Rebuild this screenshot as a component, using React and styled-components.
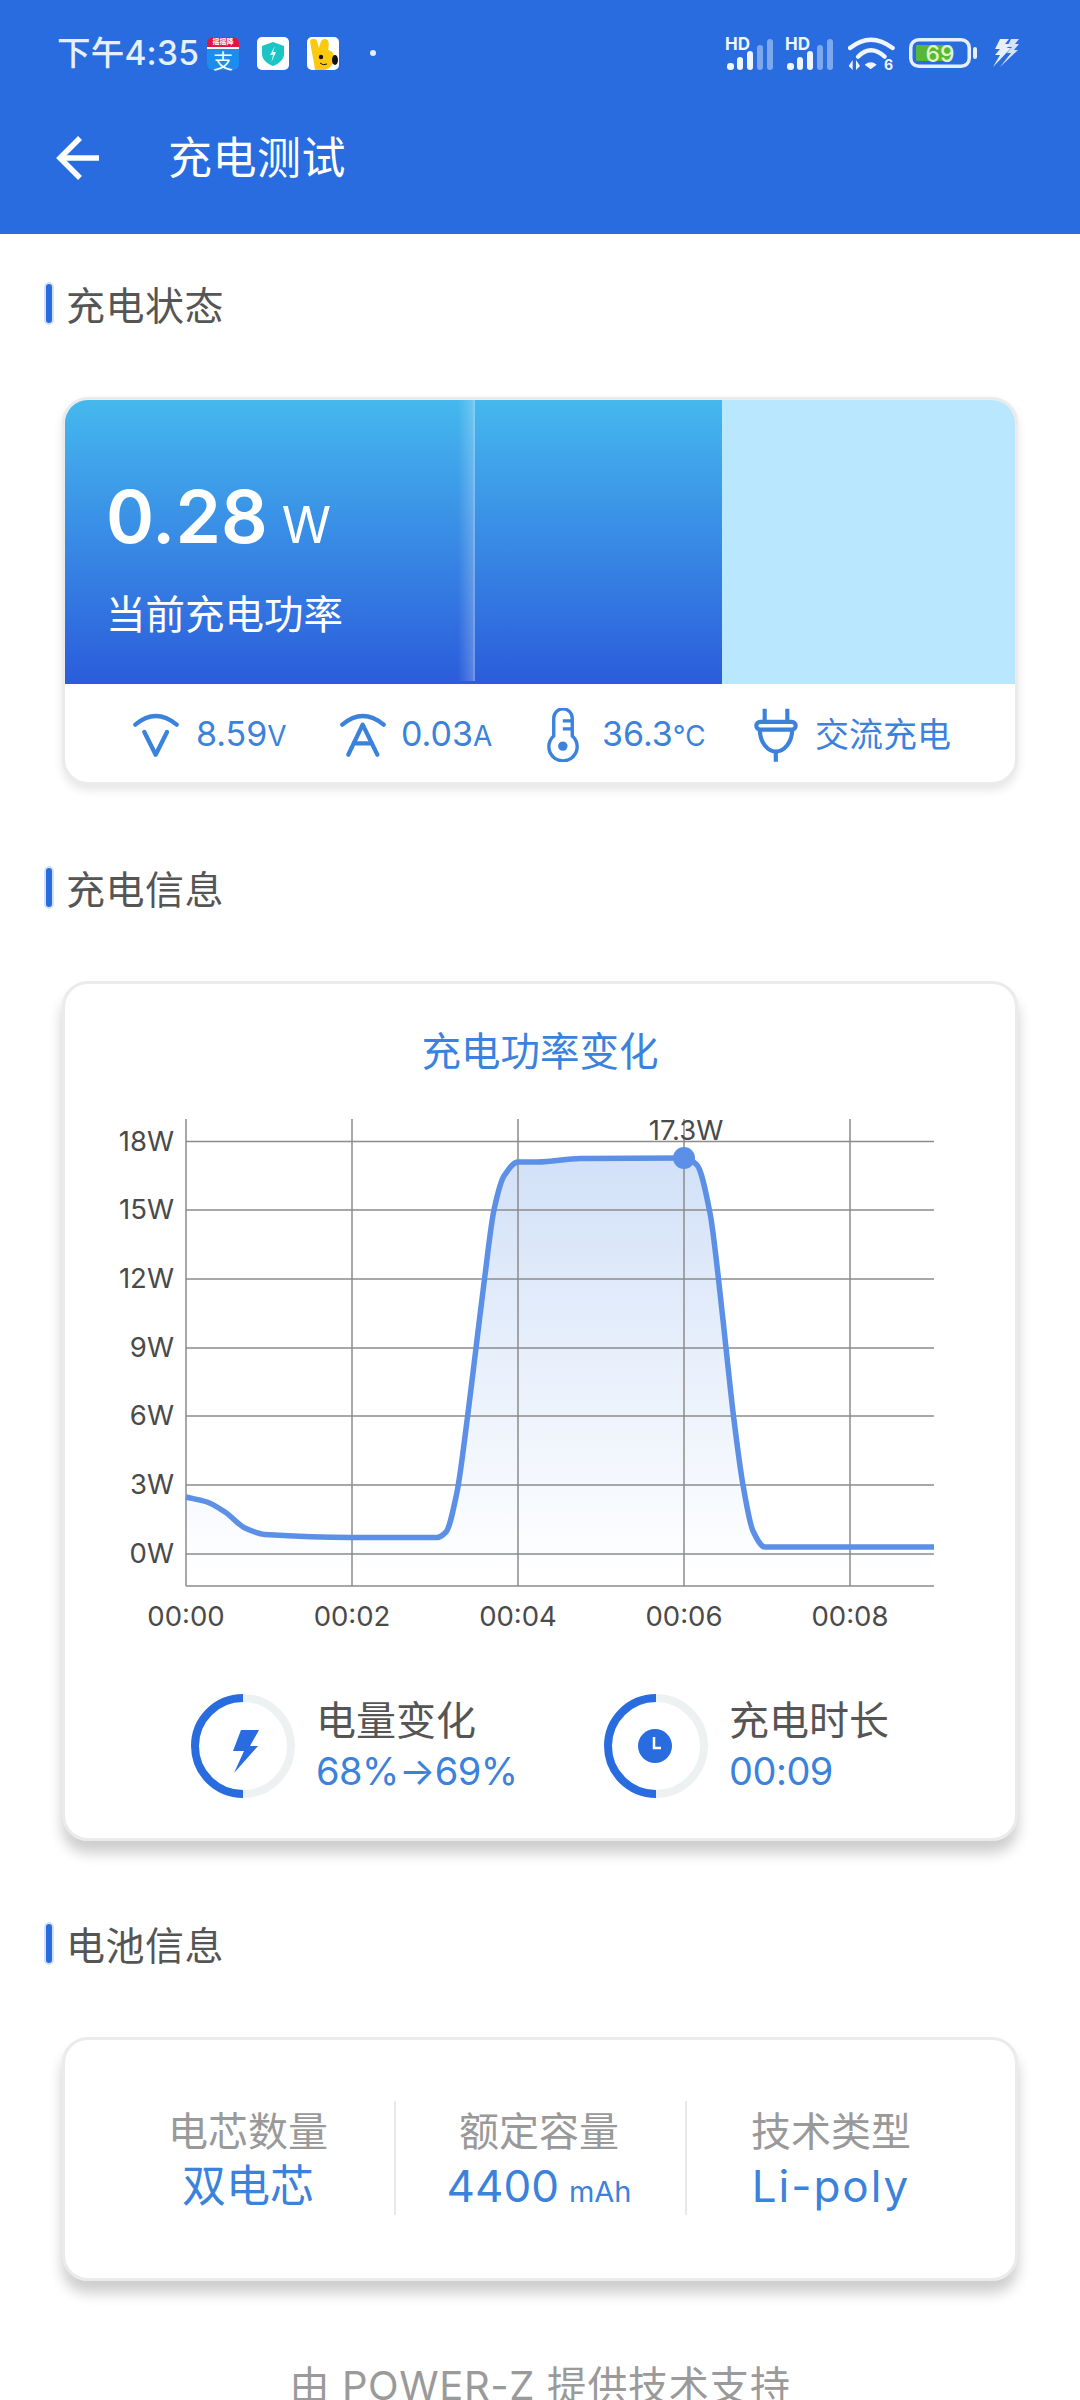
import React from "react";
import styled, { createGlobalStyle } from "styled-components";

const GlobalStyle = createGlobalStyle`
  html, body {
    margin: 0;
    padding: 0;
    height: 2400px;
    overflow: hidden;
    background: #fff;
    font-family: Inter, "Noto Sans CJK SC", sans-serif;
  }
  * {
    box-sizing: border-box;
  }
`;

const Page = styled.div`
  width: 1080px;
  height: 2400px;
  overflow: hidden;
  background: #fff;
`;

const Header = styled.header`
  height: 234px;
  background: #286ce0;
  color: #fff;
`;

const StatusBar = styled.div`
  height: 106px;
  padding: 0 61px 0 57px;
  display: flex;
  align-items: center;
  justify-content: space-between;
  color: #e6effc;
`;

const StatusGroup = styled.div`
  display: flex;
  align-items: center;
  gap: ${(p) => p.$gap || 18}px;
`;

const StatusSlot = styled.span`
  display: flex;
  margin-left: ${(p) => p.$left || 0}px;
`;

const Time = styled.span`
  font-size: 33.5px;
  line-height: 40px;
  font-weight: 500;
  letter-spacing: 0.2px;
  margin-right: -10px;
`;

const Dot = styled.span`
  width: 6px;
  height: 6px;
  border-radius: 50%;
  background: #e6effc;
  margin-left: 13px;
`;

const Toolbar = styled.div`
  height: 104px;
  padding-left: 56px;
  display: flex;
  align-items: center;
  gap: 68px;
`;

const ToolbarTitle = styled.h1`
  margin: 0;
  font-size: 44px;
  line-height: 60px;
  font-weight: 400;
  letter-spacing: 0.5px;
`;

const SectionHead = styled.div`
  display: flex;
  align-items: center;
  gap: 12px;
  height: 44px;
  margin: ${(p) => (p.$first ? 47 : 80)}px 0 72px 44px;
  font-size: 39px;
  letter-spacing: 0.5px;
  color: #555;
`;

const SectionBar = styled.span`
  width: 10px;
  height: 43px;
  border-radius: 5px;
  background: #286ce0;
  border: 2px solid #d3e2f9;
`;

const Card = styled.section`
  margin: 0 62px;
  border: 3px solid #ebebeb;
  border-radius: 26px;
  background: #fff;
  overflow: hidden;
  box-shadow: ${(p) =>
    p.$deep
      ? "0 12px 14px rgba(0, 0, 0, 0.2)"
      : "0 5px 10px rgba(0, 0, 0, 0.1)"};
`;

const PowerTrack = styled.div`
  height: 284px;
  background: #b8e7fe;
`;

const PowerFill = styled.div`
  position: relative;
  height: 100%;
  padding: 72px 0 0 41px;
  background: linear-gradient(#45b8ee, #2b5cdb);
  color: #fff;
`;

const Sheen = styled.span`
  position: absolute;
  top: 0;
  left: 393px;
  bottom: 3px;
  width: 17px;
  background: linear-gradient(90deg, rgba(255, 255, 255, 0), rgba(255, 255, 255, 0.22));
  border-right: 2px solid rgba(255, 255, 255, 0.32);
`;

const PowerValue = styled.div`
  display: flex;
  align-items: baseline;
  gap: 14px;
  height: 90px;
  font-size: 73px;
  line-height: 90px;
  font-weight: 600;
`;

const PowerUnit = styled.span`
  font-size: 50px;
  font-weight: 400;
`;

const PowerLabel = styled.div`
  margin-top: 28px;
  font-size: 39.5px;
  line-height: 50px;
`;

const StatRow = styled.div`
  height: 98px;
  padding: 4px 0 0 68px;
  display: grid;
  grid-template-columns: repeat(4, 207px);
  align-items: center;
`;

const Stat = styled.div`
  display: flex;
  align-items: center;
  gap: ${(p) => p.$gap || 17}px;
  color: #3b82dc;
  font-size: 34px;
  line-height: 44px;
  white-space: nowrap;
`;

const StatUnit = styled.span`
  font-size: 28px;
`;

const ChartTitle = styled.div`
  margin-top: 43px;
  text-align: center;
  font-size: 39.5px;
  line-height: 50px;
  color: #3b82dc;
`;

const ChartSvg = styled.svg`
  display: block;
  margin-top: 24px;
  text {
    font-family: Inter, sans-serif;
    font-size: 27.5px;
    fill: #4a4a4a;
  }
`;

const GaugeRow = styled.div`
  margin-top: 53px;
  padding: 0 0 40px 126px;
  display: grid;
  grid-template-columns: 413px 1fr;
`;

const Gauge = styled.div`
  display: flex;
  align-items: center;
  gap: 21px;
`;

const GaugeText = styled.div`
  display: flex;
  flex-direction: column;
`;

const GaugeTitle = styled.span`
  font-size: 40px;
  line-height: 50px;
  color: #555;
`;

const GaugeValue = styled.span`
  font-size: 38px;
  line-height: 50px;
  letter-spacing: -0.5px;
  color: #3b82dc;
`;

const InfoGrid = styled.div`
  height: 238px;
  padding: 61px 37px 0;
  display: grid;
  grid-template-columns: repeat(3, 291px);
  align-items: start;
`;

const InfoCell = styled.div`
  height: 114px;
  padding-top: 6px;
  margin-right: -3px;
  text-align: center;
  border-right: ${(p) => (p.$last ? "none" : "2px solid #e8e8e8")};
`;

const InfoLabel = styled.div`
  font-size: 40px;
  line-height: 50px;
  color: #999;
`;

const InfoValue = styled.div`
  font-size: 44px;
  line-height: 58px;
  letter-spacing: ${(p) => p.$spread || 0}px;
  color: #3b82dc;
`;

const InfoUnit = styled.span`
  font-size: 29px;
  margin-left: 10px;
`;

const Footer = styled.footer`
  margin-top: 80px;
  text-align: center;
  font-size: 40px;
  line-height: 50px;
  letter-spacing: 0.6px;
  color: #9a9a9a;
`;

const ICON_BLUE = "#3b82dc";

const AlipayIcon = () => (
  <svg width="32" height="43" viewBox="0 -5 32 43">
    <defs>
      <clipPath id="alipayClip">
        <rect width="32" height="33" rx="6" />
      </clipPath>
    </defs>
    <g clipPath="url(#alipayClip)">
      <rect width="32" height="33" fill="#1b8df0" />
      <rect width="32" height="10" fill="#e0163f" />
      <rect y="10" width="32" height="2" fill="#fff" />
    </g>
    <text x="16" y="7" textAnchor="middle" fontSize="7" fontWeight="700" fill="#fff" fontFamily="'Noto Sans CJK SC', sans-serif">摇摇降</text>
    <text x="16" y="32" textAnchor="middle" fontSize="20" fill="#fff" fontFamily="'Noto Sans CJK SC', sans-serif">支</text>
  </svg>
);

const ShieldIcon = () => (
  <svg width="32" height="33" viewBox="0 0 32 33">
    <rect width="32" height="33" rx="5" fill="#fff" />
    <path d="M16 5 L27 9 V17 C27 23 21 27 16 29 C11 27 5 23 5 17 V9 Z" fill="#1cc5c5" />
    <path d="M18 9 L13 18 H16 L14.5 25 L19 15 H16 Z" fill="#eafbfb" />
  </svg>
);

const RabbitIcon = () => (
  <svg width="32" height="33" viewBox="0 0 32 33">
    <rect width="32" height="33" rx="5" fill="#fff" />
    <path d="M3 4 C4 1 9 1 10 4 L12 11 C13 7 14 2 18 2 C23 2 22 9 21 13 C26 14 28 18 27 23 C26 28 22 32 18 33 H8 C7 24 4 12 3 4 Z" fill="#fbc90f" />
    <ellipse cx="28" cy="23" rx="3" ry="5" fill="#111" />
    <circle cx="14" cy="20" r="2.2" fill="#111" />
    <path d="M13 26 Q16 29 20 27" fill="none" stroke="#111" strokeWidth="1" />
  </svg>
);

const SignalIcon = () => (
  <svg width="50" height="41" viewBox="0 -4 50 41">
    <text x="0" y="13" fontSize="17" fontWeight="700" fill="#f1f6fe" fontFamily="Inter, sans-serif">HD</text>
    <rect x="2" y="26" width="7" height="7" rx="3" fill="#f1f6fe" />
    <rect x="12" y="20" width="6" height="13" rx="3" fill="#f1f6fe" />
    <rect x="22" y="14" width="6" height="19" rx="3" fill="#f1f6fe" />
    <rect x="32" y="8" width="6" height="25" rx="3" fill="#7ea8ee" />
    <rect x="42" y="2" width="6" height="31" rx="3" fill="#7ea8ee" />
  </svg>
);

const WifiIcon = () => (
  <svg width="47" height="45" viewBox="0 -15 141 135">
    <g fill="none" stroke="#f1f6fe" strokeWidth="13" strokeLinecap="round">
      <path d="M6 36 Q68 -14 134 36" />
      <path d="M30 62 Q68 24 110 62" />
    </g>
    <path d="M50 86 Q68 72 86 86 L68 100 Z" fill="#f1f6fe" />
    <path d="M2 90 H14 V72 L2 90 M2 90 L14 102 V90 Z" fill="#f1f6fe" />
    <path d="M24 72 L36 90 H24 Z M24 90 H36 L24 102 Z" fill="#f1f6fe" />
    <text x="108" y="103" fontSize="42" fontWeight="700" fill="#f1f6fe" fontFamily="Inter, sans-serif">6</text>
  </svg>
);

const BatteryIcon = () => (
  <svg width="68" height="30" viewBox="0 0 68 30">
    <rect x="1.75" y="1.75" width="58.5" height="26.5" rx="8" fill="none" stroke="#e6effc" strokeWidth="3.5" />
    <rect x="7" y="7" width="35" height="16" rx="1" fill="#57b835" />
    <rect x="64" y="9" width="4" height="12" rx="2" fill="#e6effc" />
    <text x="31" y="23.5" textAnchor="middle" fontSize="23" fontWeight="500" fill="#dff5c8" fontFamily="Inter, sans-serif">69</text>
  </svg>
);

const ChargeBolts = () => (
  <svg width="27" height="30" viewBox="0 0 27 30" fill="#e8f0fd">
    <path d="M8 1 H17 L13 6 H18 L15 10 H19 L1 29 L8 17 H3 L8 11 H3 Z" />
    <path d="M19 1 H27 L23 6 H27 L22 12 H26 L8 29 L19 15 H15 L20 9 H15 Z" opacity="0.9" />
  </svg>
);

const BackArrow = () => (
  <svg width="44" height="46" viewBox="0 0 44 46" fill="none" stroke="#fff" strokeWidth="5.5">
    <path d="M43 23 H4" />
    <path d="M24 3 L4 23 L24 43" />
  </svg>
);

const ArcV = () => (
  <svg width="46" height="46" viewBox="0 0 138 138" fill="none" stroke={ICON_BLUE} strokeWidth="13" strokeLinecap="round" strokeLinejoin="round">
    <path d="M7 38 Q68 -14 131 38" />
    <path d="M34 60 L68 128 L102 60" />
  </svg>
);

const ArcA = () => (
  <svg width="46" height="46" viewBox="0 0 138 138" fill="none" stroke={ICON_BLUE} strokeWidth="13" strokeLinecap="round" strokeLinejoin="round">
    <path d="M7 38 Q68 -14 131 38" />
    <path d="M25 128 L68 38 L112 128" />
    <path d="M42 94 H95" />
  </svg>
);

const Thermometer = () => (
  <svg width="32" height="54" viewBox="0 0 95 160" fill="none" stroke={ICON_BLUE} strokeWidth="10">
    <path d="M20 83 V30 A27 27 0 0 1 75 30 V83 A42 42 0 1 1 20 83 Z" />
    <path d="M47 38 H75 M47 62 H75" />
    <circle cx="47" cy="113" r="14" fill={ICON_BLUE} stroke="none" />
  </svg>
);

const Plug = () => (
  <svg width="44" height="54" viewBox="0 0 125 155" fill="none" stroke={ICON_BLUE} strokeWidth="12">
    <path d="M30 2 V40 M95 2 V40" />
    <rect x="6" y="40" width="113" height="22" rx="11" />
    <path d="M16 62 C16 100 40 125 62 125 C85 125 109 100 109 62" />
    <path d="M62 125 V154" />
  </svg>
);

const GaugeRing = ({ children }) => (
  <svg width="104" height="104" viewBox="0 0 104 104" fill="none" strokeWidth="8">
    <path d="M52 4 A48 48 0 0 1 52 100" stroke="#eef1f2" />
    <path d="M52 100 A48 48 0 0 1 52 4" stroke="#286ce0" />
    {children}
  </svg>
);

// page coordinates, the svg viewBox below uses the same ones
const curve = [
  [186, 1496], [207, 1501], [225, 1511], [245, 1527], [265, 1533.5], [352, 1536.5],
  [437, 1536.5], [446, 1531], [457, 1491], [467.5, 1416], [476, 1347], [484.5, 1278],
  [494, 1209], [504, 1175], [518, 1161], [538, 1161], [580, 1157.5], [684, 1157],
  [697, 1164], [710, 1212], [718.5, 1278], [726, 1347], [733.5, 1415], [743, 1484],
  [753, 1530], [765, 1546], [934, 1546],
];

// monotone cubic so the flat parts do not overshoot
const smoothPath = (pts) => {
  const slopes = pts.slice(1).map((p, i) => (p[1] - pts[i][1]) / (p[0] - pts[i][0]));
  const tangents = pts.map((_, i) => {
    if (i === 0) return slopes[0];
    if (i === pts.length - 1) return slopes[i - 1];
    const a = slopes[i - 1];
    const b = slopes[i];
    return a * b <= 0 ? 0 : (2 * a * b) / (a + b);
  });
  let d = `M${pts[0][0]} ${pts[0][1]}`;
  for (let i = 0; i < pts.length - 1; i++) {
    const [x0, y0] = pts[i];
    const [x1, y1] = pts[i + 1];
    const h = (x1 - x0) / 3;
    d += ` C${(x0 + h).toFixed(1)} ${(y0 + tangents[i] * h).toFixed(1)} ${(x1 - h).toFixed(1)} ${(y1 - tangents[i + 1] * h).toFixed(1)} ${x1} ${y1}`;
  }
  return d;
};

const linePath = smoothPath(curve);
const yTicks = [
  ["18W", 1140.5], ["15W", 1209], ["12W", 1278], ["9W", 1347], ["6W", 1415], ["3W", 1484], ["0W", 1553],
];
const xTicks = [
  ["00:00", 186], ["00:02", 352], ["00:04", 518], ["00:06", 684], ["00:08", 850],
];

const PowerChart = () => (
  <ChartSvg width="950" height="540" viewBox="65 1100 950 540">
    <defs>
      <linearGradient id="areaFill" x1="0" y1="0" x2="0" y2="1">
        <stop offset="0" stopColor="#d2e1f8" />
        <stop offset="1" stopColor="#ffffff" />
      </linearGradient>
    </defs>
    <path d={`${linePath} V1575 H186 Z`} fill="url(#areaFill)" />
    <g stroke="#8b8b8b" strokeWidth="1.5">
      {yTicks.map(([, y]) => (
        <line key={y} x1="186" x2="934" y1={y} y2={y} />
      ))}
      {xTicks.map(([, x]) => (
        <line key={x} x1={x} x2={x} y1="1118" y2="1585" />
      ))}
      <line x1="186" x2="934" y1="1585" y2="1585" />
    </g>
    <path d={linePath} fill="none" stroke="#5b90e6" strokeWidth="5.5" />
    <circle cx="684" cy="1157" r="11" fill="#5b90e6" />
    <text x="686" y="1139" textAnchor="middle">17.3W</text>
    {yTicks.map(([label, y]) => (
      <text key={label} x="174" y={y + 9} textAnchor="end">{label}</text>
    ))}
    {xTicks.map(([label, x]) => (
      <text key={label} x={x} y="1625" textAnchor="middle">{label}</text>
    ))}
  </ChartSvg>
);

export default function App() {
  return (
    <Page>
      <GlobalStyle />
      <Header>
        <StatusBar>
          <StatusGroup>
            <Time>下午4:35</Time>
            <AlipayIcon />
            <ShieldIcon />
            <RabbitIcon />
            <Dot />
          </StatusGroup>
          <StatusGroup $gap={10}>
            <SignalIcon />
            <SignalIcon />
            <StatusSlot $left={3}><WifiIcon /></StatusSlot>
            <StatusSlot $left={4}><BatteryIcon /></StatusSlot>
            <StatusSlot $left={5}><ChargeBolts /></StatusSlot>
          </StatusGroup>
        </StatusBar>
        <Toolbar>
          <BackArrow />
          <ToolbarTitle>充电测试</ToolbarTitle>
        </Toolbar>
      </Header>

      <SectionHead $first>
        <SectionBar />
        充电状态
      </SectionHead>
      <Card>
        <PowerTrack>
          <PowerFill style={{ width: `${(656 / 948) * 100}%` }}>
            <Sheen />
            <PowerValue>
              0.28
              <PowerUnit>W</PowerUnit>
            </PowerValue>
            <PowerLabel>当前充电功率</PowerLabel>
          </PowerFill>
        </PowerTrack>
        <StatRow>
          <Stat><ArcV /><span>8.59<StatUnit>V</StatUnit></span></Stat>
          <Stat $gap={15}><ArcA /><span>0.03<StatUnit>A</StatUnit></span></Stat>
          <Stat $gap={23}><Thermometer /><span>36.3<StatUnit>℃</StatUnit></span></Stat>
          <Stat><Plug /><span>交流充电</span></Stat>
        </StatRow>
      </Card>

      <SectionHead>
        <SectionBar />
        充电信息
      </SectionHead>
      <Card $deep>
        <ChartTitle>充电功率变化</ChartTitle>
        <PowerChart />
        <GaugeRow>
          <Gauge>
            <GaugeRing>
              <path d="M50 36 H68 L59 52 H67 L43 79 L53 57 H42 Z" fill="#286ce0" />
            </GaugeRing>
            <GaugeText>
              <GaugeTitle>电量变化</GaugeTitle>
              <GaugeValue>68%→69%</GaugeValue>
            </GaugeText>
          </Gauge>
          <Gauge>
            <GaugeRing>
              <circle cx="51" cy="52" r="17" fill="#286ce0" />
              <path d="M50 43 V54 H57" stroke="#fff" strokeWidth="2.5" />
            </GaugeRing>
            <GaugeText>
              <GaugeTitle>充电时长</GaugeTitle>
              <GaugeValue>00:09</GaugeValue>
            </GaugeText>
          </Gauge>
        </GaugeRow>
      </Card>

      <SectionHead>
        <SectionBar />
        电池信息
      </SectionHead>
      <Card $deep>
        <InfoGrid>
          <InfoCell>
            <InfoLabel>电芯数量</InfoLabel>
            <InfoValue>双电芯</InfoValue>
          </InfoCell>
          <InfoCell>
            <InfoLabel>额定容量</InfoLabel>
            <InfoValue>4400<InfoUnit>mAh</InfoUnit></InfoValue>
          </InfoCell>
          <InfoCell $last>
            <InfoLabel>技术类型</InfoLabel>
            <InfoValue $spread={2}>Li-poly</InfoValue>
          </InfoCell>
        </InfoGrid>
      </Card>

      <Footer>由 POWER-Z 提供技术支持</Footer>
    </Page>
  );
}
